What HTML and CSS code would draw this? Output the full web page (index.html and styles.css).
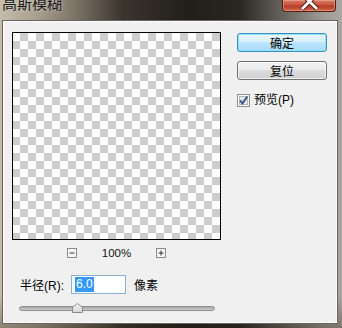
FILE: index.html
```html
<!DOCTYPE html>
<html lang="zh">
<head>
<meta charset="utf-8">
<title>高斯模糊</title>
<link rel="stylesheet" href="styles.css">
</head>
<body>
<div class="titlebar">
  <span class="title">高斯模糊</span>
  <span class="close">
    <svg width="54" height="11" viewBox="0 0 54 11"><path d="M18 -8 L35 9 M37 -8 L20 9" stroke="#5a1a10" stroke-width="4.8" fill="none"/><path d="M18 -8 L35 9 M37 -8 L20 9" stroke="#fff" stroke-width="2.8" fill="none"/></svg>
  </span>
</div>
<div class="client">
  <div class="top">
    <div class="preview-col">
      <div class="canvas"></div>
      <div class="zoom">
        <span class="zbtn"><svg width="10" height="10" viewBox="0 0 10 10"><rect x=".5" y=".5" width="9" height="9" fill="#f5f5f5" stroke="#8c8c8c"/><path d="M2.5 5 H7.5" stroke="#333"/></svg></span>
        <span class="zval">100%</span>
        <span class="zbtn"><svg width="10" height="10" viewBox="0 0 10 10"><rect x=".5" y=".5" width="9" height="9" fill="#f5f5f5" stroke="#8c8c8c"/><path d="M2.5 5 H7.5 M5 2.5 V7.5" stroke="#333"/></svg></span>
      </div>
    </div>
    <div class="side">
      <button class="btn btn-default">确定</button>
      <button class="btn">复位</button>
      <label class="check">
        <span class="box"><svg width="13" height="13" viewBox="0 0 13 13"><rect x=".5" y=".5" width="12" height="12" fill="#fdfdfd" stroke="#8e8f8f"/><rect x="2.5" y="2.5" width="8" height="8" fill="#e4e6ea" stroke="#b4b8be"/><path d="M3 6.5 L5.5 9.3 L10.3 2.5" stroke="#3f5590" stroke-width="2" fill="none"/></svg></span>
        <span class="check-label">预览(P)</span>
      </label>
    </div>
  </div>
  <div class="radius">
    <div class="row">
      <span class="label">半径(R):</span>
      <span class="input"><span class="sel">6.0</span></span>
      <span class="unit">像素</span>
    </div>
    <div class="slider">
      <span class="thumb"><svg width="11" height="10" viewBox="0 0 11 10"><defs><linearGradient id="tg" x1="0" y1="0" x2="0" y2="1"><stop offset="0" stop-color="#f7f7f7"/><stop offset="1" stop-color="#d4d4d4"/></linearGradient></defs><path d="M.5 9.5 V4.5 L5.5 .5 L10.5 4.5 V9.5 Z" fill="url(#tg)" stroke="#8a8a8a"/></svg></span>
    </div>
  </div>
</div>
</body>
</html>
```

FILE: styles.css
```css
* { box-sizing: border-box; }

body {
  margin: 0;
  width: 342px;
  height: 328px;
  overflow: hidden;
  font-family: "Liberation Sans", "Noto Sans CJK SC", sans-serif;
  font-size: 12px;
  color: #000;
  background:
    linear-gradient(180deg, rgba(0,0,0,0) 0%, rgba(0,0,0,0) 90%, rgba(40,30,15,.35) 100%),
    linear-gradient(90deg, #c4bba8 0%, #aaa190 10%, #7c7366 22%, #3a342d 36%, #221e1a 55%, #2a2622 70%, #6d6a64 84%, #9c9993 94%, #aaa7a1 100%);
}

.titlebar {
  height: 20px;
  display: flex;
  justify-content: space-between;
  align-items: flex-start;
  overflow: hidden;
}

.title {
  font-family: "Noto Sans CJK SC", sans-serif;
  font-size: 15px;
  line-height: 15px;
  margin: -5px 0 0 2px;
  color: #1c1c1c;
  text-shadow: 0 0 4px rgba(225, 220, 210, 0.9);
}

.close {
  display: block;
  width: 54px;
  height: 12px;
  margin-right: 6px;
  border: 1px solid #5c1b12;
  border-top: 0;
  border-radius: 0 0 4px 4px;
  background: linear-gradient(#d4806e 0%, #c8523d 45%, #b63a24 55%, #cc6a4f 100%);
  box-shadow: inset 0 0 0 1px rgba(255, 190, 170, 0.45);
  overflow: hidden;
}
.close svg { display: block; margin: 0 0 0 -1px; }

.client {
  margin: 0 4px 0 2px;
  height: 304px;
  border: 1px solid #666;
  box-shadow: inset 0 0 0 1px #fbfbfb;
  background: #f0f0f0;
  padding: 11px 0 0 9px;
}

.top {
  display: flex;
  gap: 16px;
}

.canvas {
  width: 209px;
  height: 208px;
  border: 1px solid #000;
  background-color: #fff;
  background-image: conic-gradient(#cccccc 25%, #ffffff 0 50%, #cccccc 0 75%, #ffffff 0);
  background-size: 16px 16px;
  background-position: -1px 0;
}

.zoom {
  display: flex;
  justify-content: center;
  align-items: center;
  gap: 25px;
  margin-top: 8px;
  height: 10px;
}
.zbtn { display: block; width: 10px; height: 10px; }
.zbtn svg { display: block; }
.zval {
  font-size: 11.5px;
  line-height: 10px;
  color: #111;
}

.side {
  margin-top: 1px;
  display: flex;
  flex-direction: column;
  width: 90px;
}

.btn {
  width: 90px;
  height: 19px;
  padding: 0;
  font-family: "Noto Sans CJK SC", sans-serif;
  font-size: 12px;
  line-height: 17px;
  color: #000;
  border: 1px solid #707070;
  border-radius: 3px;
  background: linear-gradient(#f2f2f2 0%, #ebebeb 45%, #dddddd 50%, #cfcfcf 100%);
  box-shadow: inset 0 0 0 1px rgba(255, 255, 255, 0.7);
}
.btn + .btn { margin-top: 9px; }
.btn-default {
  border-color: #3c8fc4;
  background: linear-gradient(#eaf6fd 0%, #d9f0fc 45%, #bee6fd 50%, #a7d9f5 100%);
  box-shadow: inset 0 0 0 1px #8fe3f7;
}

.check {
  margin-top: 14px;
  display: flex;
  align-items: center;
  gap: 4px;
  height: 13px;
}
.box { display: block; width: 13px; height: 13px; }
.box svg { display: block; }
.check-label { font-size: 12px; line-height: 13px; }

.radius {
  margin: 17px 0 0 7px;
}

.row {
  display: flex;
  align-items: center;
  height: 19px;
}
.label {
  width: 52px;
  padding-left: 1px;
}
.input {
  display: flex;
  align-items: center;
  width: 55px;
  height: 19px;
  border: 1px solid #8eb0d6;
  background: #fff;
  padding-left: 3px;
}
.sel {
  background: #3399ff;
  color: #fff;
  line-height: 15px;
  padding: 0 1px;
}
.unit { margin-left: 8px; }

.slider {
  position: relative;
  margin-top: 12px;
  width: 196px;
  height: 5px;
  border: 1px solid #8f8f8f;
  border-radius: 3px;
  background: linear-gradient(#a6a6a6, #c9c9c9);
}
.thumb {
  position: absolute;
  left: 52px;
  top: -4px;
  width: 11px;
  height: 10px;
}
.thumb svg { display: block; }
```
